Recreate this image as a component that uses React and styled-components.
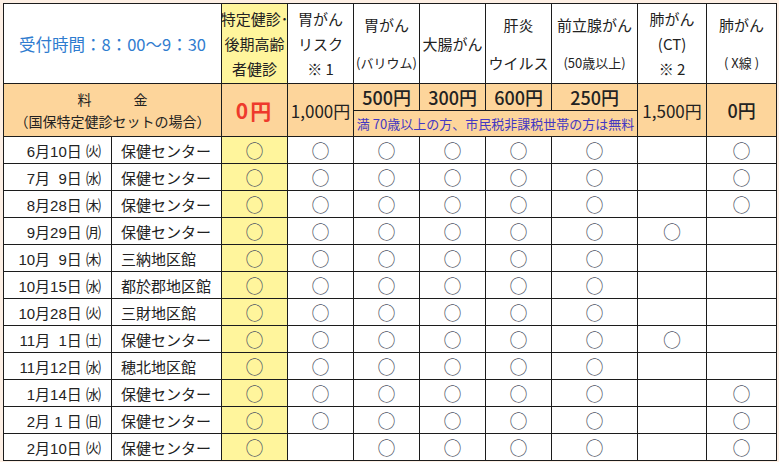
import React from "react";
import styled, { createGlobalStyle } from "styled-components";

const GlobalStyle = createGlobalStyle`
  body {
    margin: 0;
    background: #fdefe4;
  }
`;

const rows = [
  { date: "6月10日", wd: "㈫", place: "保健センター", marks: [1, 1, 1, 1, 1, 1, 0, 1] },
  { date: "7月  9日", wd: "㈬", place: "保健センター", marks: [1, 1, 1, 1, 1, 1, 0, 1] },
  { date: "8月28日", wd: "㈭", place: "保健センター", marks: [1, 1, 1, 1, 1, 1, 0, 1] },
  { date: "9月29日", wd: "㈪", place: "保健センター", marks: [1, 1, 1, 1, 1, 1, 1, 0] },
  { date: "10月  9日", wd: "㈭", place: "三納地区館", marks: [1, 1, 1, 1, 1, 1, 0, 0] },
  { date: "10月15日", wd: "㈬", place: "都於郡地区館", marks: [1, 1, 1, 1, 1, 1, 0, 0] },
  { date: "10月28日", wd: "㈫", place: "三財地区館", marks: [1, 1, 1, 1, 1, 1, 0, 0] },
  { date: "11月  1日", wd: "㈯", place: "保健センター", marks: [1, 1, 1, 1, 1, 1, 1, 0] },
  { date: "11月12日", wd: "㈬", place: "穂北地区館", marks: [1, 1, 1, 1, 1, 1, 0, 0] },
  { date: "1月14日", wd: "㈬", place: "保健センター", marks: [1, 1, 1, 1, 1, 1, 0, 1] },
  { date: "2月 1 日", wd: "㈰", place: "保健センター", marks: [1, 1, 1, 1, 1, 1, 0, 1] },
  { date: "2月10日", wd: "㈫", place: "保健センター", marks: [1, 0, 1, 1, 1, 1, 0, 1] },
];

const widths = [108, 110, 66, 66, 66, 66, 66, 86, 69, 70];

function App() {
  return (
    <Page>
      <GlobalStyle />
      <Sheet>
        <colgroup>
          {widths.map((w, i) => (
            <col key={i} style={{ width: w }} />
          ))}
        </colgroup>
        <thead>
          <tr>
            <Reception colSpan={2}>受付時間：8：00～9：30</Reception>
            <HeadCell yellow>
              <Lines>
                <span>特定健診･</span>
                <span>後期高齢</span>
                <span>者健診</span>
              </Lines>
            </HeadCell>
            <HeadCell>
              <Lines>
                <span>胃がん</span>
                <span>リスク</span>
                <span>※ 1</span>
              </Lines>
            </HeadCell>
            <HeadCell>
              <Lines wide>
                <span>胃がん</span>
                <Small>(バリウム)</Small>
              </Lines>
            </HeadCell>
            <HeadCell>大腸がん</HeadCell>
            <HeadCell>
              <Lines wide>
                <span>肝炎</span>
                <span>ウイルス</span>
              </Lines>
            </HeadCell>
            <HeadCell>
              <Lines wide>
                <span>前立腺がん</span>
                <Small>(50歳以上)</Small>
              </Lines>
            </HeadCell>
            <HeadCell>
              <Lines>
                <span>肺がん</span>
                <span>(CT)</span>
                <span>※ 2</span>
              </Lines>
            </HeadCell>
            <HeadCell>
              <Lines wide>
                <span>肺がん</span>
                <Small>( X線 )</Small>
              </Lines>
            </HeadCell>
          </tr>
        </thead>
        <tbody>
          <tr>
            <FeeLabel colSpan={2} rowSpan={2}>
              <Lines>
                <span>料　　　金</span>
                <span>（国保特定健診セットの場合）</span>
              </Lines>
            </FeeLabel>
            <FeeCell rowSpan={2}>
              <Free>0円</Free>
            </FeeCell>
            <FeeCell rowSpan={2}>1,000円</FeeCell>
            <FeeCell bold>500円</FeeCell>
            <FeeCell bold>300円</FeeCell>
            <FeeCell bold>600円</FeeCell>
            <FeeCell bold>250円</FeeCell>
            <FeeCell rowSpan={2}>1,500円</FeeCell>
            <FeeCell rowSpan={2} bold>0円</FeeCell>
          </tr>
          <tr>
            <Note colSpan={4}>満 70歳以上の方、市民税非課税世帯の方は無料</Note>
          </tr>
          {rows.map((r, i) => (
            <tr key={i}>
              <DateCell>
                {r.date} <Weekday>{r.wd}</Weekday>
              </DateCell>
              <PlaceCell>{r.place}</PlaceCell>
              {r.marks.map((m, j) => (
                <MarkCell key={j} yellow={j === 0}>
                  {m ? <Circle>○</Circle> : null}
                </MarkCell>
              ))}
            </tr>
          ))}
        </tbody>
      </Sheet>
    </Page>
  );
}

export default App;

const Page = styled.div`
  padding: 3px 0 0 3px;
  font-family: "Liberation Sans", "Noto Sans CJK JP", sans-serif;
  color: #222;
`;

const Sheet = styled.table`
  table-layout: fixed;
  border-collapse: collapse;
  width: 773px;
  background: #fff;

  td,
  th {
    border: 1px solid #1c1c1c;
    padding: 0;
    font-weight: normal;
  }
`;

const Reception = styled.th`
  color: #2f7ccf;
  font-family: "Noto Sans CJK JP", sans-serif;
  font-size: 16.5px;
  text-align: center;
`;

const HeadCell = styled.th`
  height: 77px;
  padding: 1px 0 !important;
  background: ${(p) => (p.yellow ? "#fff59c" : "#fff")};
  font-family: "Noto Sans CJK JP", sans-serif;
  font-size: 15px;
  text-align: center;
  white-space: nowrap;
`;

const Lines = styled.div`
  display: flex;
  flex-direction: column;
  align-items: center;
  line-height: ${(p) => (p.wide ? "38px" : "25px")};
`;

const Small = styled.span`
  font-size: 13px;
`;

const FeeLabel = styled.td`
  background: #fdd59b;
  font-family: "Noto Sans CJK JP", sans-serif;
  font-size: 14px;
  text-align: center;

  ${Lines} {
    line-height: 22px;
  }
`;

const FeeCell = styled.td`
  height: 26px;
  background: #fdd59b;
  font-family: "Noto Sans CJK JP", sans-serif;
  font-size: ${(p) => (p.bold ? "18px" : "17px")};
  font-weight: ${(p) => (p.bold ? 500 : 400)} !important;
  text-align: center;
  white-space: nowrap;
`;

const Free = styled.span`
  color: #ee3a2c;
  font-size: 21px;
  font-weight: 700;
  letter-spacing: 2px;
`;

const Note = styled.td`
  height: 25px;
  background: #fdd59b;
  color: #4338c2;
  font-family: "Noto Sans CJK JP", sans-serif;
  font-size: 13px;
  text-align: center;
  white-space: nowrap;
`;

const DateCell = styled.td`
  height: 26px;
  padding-right: 10px !important;
  font-size: 15px;
  text-align: right;
  white-space: pre;
`;

const Weekday = styled.span`
  font-family: "Noto Sans CJK JP", sans-serif;
  font-size: 15px;
`;

const PlaceCell = styled.td`
  padding-left: 9px !important;
  font-family: "Noto Sans CJK JP", sans-serif;
  font-size: 15px;
  white-space: nowrap;
`;

const MarkCell = styled.td`
  background: ${(p) => (p.yellow ? "#fff59c" : "#fff")};
  text-align: center;
`;

const Circle = styled.span`
  font-family: "Noto Sans CJK JP", sans-serif;
  font-size: 18px;
  color: #4f5566;
`;
